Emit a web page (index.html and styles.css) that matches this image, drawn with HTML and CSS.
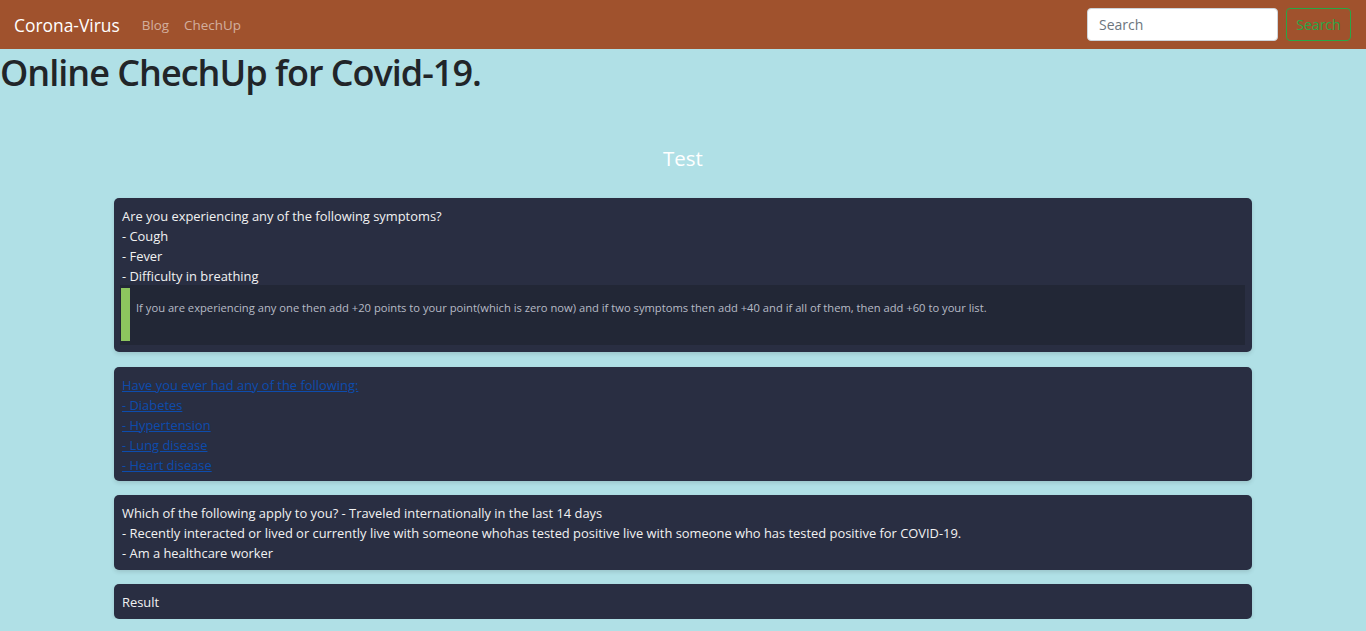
FILE: index.html
```html
<!DOCTYPE html>
<html lang="en">
<head>
<meta charset="utf-8">
<title>Corona-Virus</title>
<link rel="stylesheet" href="styles.css">
</head>
<body>
<nav class="navbar">
  <a class="brand" href="#">Corona-Virus</a>
  <div class="nav-links">
    <a class="nav-link" href="#">Blog</a>
    <a class="nav-link" href="#">ChechUp</a>
  </div>
  <form class="search-form">
    <input class="search-input" type="search" placeholder="Search">
    <button class="search-btn" type="button">Search</button>
  </form>
</nav>
<h1 class="page-title">Online ChechUp for Covid-19.</h1>
<h4 class="test-title">Test</h4>
<main class="cards">
  <section class="card">
    <div class="line">Are you experiencing any of the following symptoms?</div>
    <div class="line">- Cough</div>
    <div class="line">- Fever</div>
    <div class="line">- Difficulty in breathing</div>
    <div class="note">
      <div class="note-inner">If you are experiencing any one then add +20 points to your point(which is zero now) and if two symptoms then add +40 and if all of them, then add +60 to your list.</div>
    </div>
  </section>
  <section class="card card-links">
    <a class="card-link" href="#">Have you ever had any of the following:<br>- Diabetes<br>- Hypertension<br>- Lung disease<br>- Heart disease</a>
  </section>
  <section class="card">
    <div class="line">Which of the following apply to you? - Traveled internationally in the last 14 days</div>
    <div class="line">- Recently interacted or lived or currently live with someone whohas tested positive live with someone who has tested positive for COVID-19.</div>
    <div class="line">- Am a healthcare worker</div>
  </section>
  <section class="card">
    <div class="line">Result</div>
  </section>
</main>
</body>
</html>
```

FILE: styles.css
```css
* { box-sizing: border-box; }

body {
  margin: 0;
  background: #b0e0e6;
  font-family: "Open Sans", "Noto Sans", sans-serif;
  color: #212529;
}

.navbar {
  display: flex;
  align-items: center;
  height: 49px;
  padding: 0 15px 0 14px;
  background: #a0522d;
}

.brand {
  color: #fff;
  text-decoration: none;
  font-size: 17.4px;
  margin-right: 22px;
}

.nav-links {
  display: flex;
  gap: 15px;
}

.nav-link {
  color: rgba(255, 255, 255, 0.55);
  text-decoration: none;
  font-size: 13.4px;
}

.search-form {
  margin-left: auto;
  display: flex;
  gap: 8px;
}

.search-input {
  width: 191px;
  height: 33px;
  padding: 0 11px;
  border: 1px solid #ced4da;
  border-radius: 4px;
  font-family: inherit;
  font-size: 14px;
  color: #495057;
  background: #fff;
}

.search-input::placeholder { color: #6c757d; }

.search-btn {
  width: 65px;
  height: 33px;
  padding: 0;
  border: 1px solid #28a745;
  border-radius: 4px;
  background: transparent;
  color: #28a745;
  font-family: inherit;
  font-size: 14px;
}

.page-title {
  margin: 0;
  font-size: 36px;
  line-height: 48px;
  letter-spacing: -1px;
  font-weight: 600;
  color: #212529;
}

.test-title {
  margin: 48px 0 0;
  text-align: center;
  font-size: 20.5px;
  line-height: 26px;
  font-weight: 400;
  color: #fff;
}

.cards {
  display: flex;
  flex-direction: column;
  gap: 14px;
  margin: 27px 114px 0;
}

.card {
  background: #292e42;
  border-radius: 5px;
  padding: 8px 8px 7px;
  box-shadow: 0 2px 4px rgba(0, 0, 0, 0.12);
  color: #f2f2f2;
  font-size: 12.9px;
  line-height: 20px;
}

.card-links {
  margin-top: 1px;
  padding-bottom: 6px;
}

.card-link {
  color: #0d4cad;
  text-decoration: underline;
}

.note {
  margin: -1px -1px 0 -2px;
  padding: 3px 1px 4px;
  background: #222736;
}

.note-inner {
  height: 53px;
  border-left: 9px solid #8dc55e;
  padding: 11px 6px 0;
  font-size: 11.2px;
  line-height: 18px;
  color: #b7bbc6;
}
```
